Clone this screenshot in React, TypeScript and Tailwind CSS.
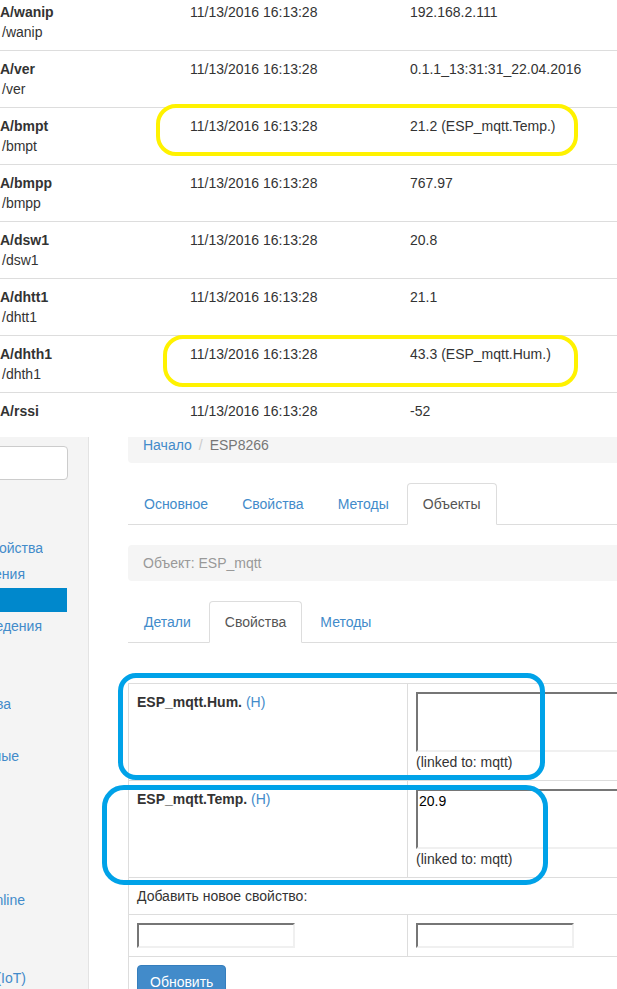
import React from 'react';

// rows of the topic list (upper screenshot)
const topics = [
  { name: 'A/wanip', path: '/wanip', value: '192.168.2.111' },
  { name: 'A/ver', path: '/ver', value: '0.1.1_13:31:31_22.04.2016' },
  { name: 'A/bmpt', path: '/bmpt', value: '21.2 (ESP_mqtt.Temp.)' },
  { name: 'A/bmpp', path: '/bmpp', value: '767.97' },
  { name: 'A/dsw1', path: '/dsw1', value: '20.8' },
  { name: 'A/dhtt1', path: '/dhtt1', value: '21.1' },
  { name: 'A/dhth1', path: '/dhth1', value: '43.3 (ESP_mqtt.Hum.)' },
  { name: 'A/rssi', path: '', value: '-52' },
];

function TopicTable() {
  return (
    <div className="h-[437px] overflow-hidden">
      <div className="-mt-[6px]">
        {topics.map((t) => (
          <div key={t.name} className="grid grid-cols-[190px_220px_1fr] border-b border-[#dddddd] py-2 leading-5">
            <div className="whitespace-nowrap">
              <div className="font-bold">{t.name}</div>
              <div className="ml-[2px] h-5">{t.path}</div>
            </div>
            <div>11/13/2016 16:13:28</div>
            <div className="whitespace-nowrap">{t.value}</div>
          </div>
        ))}
      </div>
    </div>
  );
}

// sidebar items: visible tail of the text, width where the text ends, top margin
const sideItems: { text: string; w: number; mt: number; active?: boolean }[] = [
  { text: 'Свойства', w: 43, mt: 55 },
  { text: 'Значения', w: 25, mt: 0 },
  { text: '', w: 67, mt: 0, active: true },
  { text: 'Поведения', w: 42, mt: 0 },
  { text: '', w: 0, mt: 0 },
  { text: '', w: 0, mt: 0 },
  { text: 'Устройства', w: 11, mt: 0 },
  { text: '', w: 0, mt: 0 },
  { text: 'Данные', w: 19, mt: 0 },
  { text: 'Online', w: 25, mt: 118 },
  { text: 'Устройства (IoT)', w: 26, mt: 52 },
];

function Sidebar() {
  return (
    <div className="w-[89px] shrink-0 bg-[#f4f4f4] border-r border-[#e3e3e3]">
      <div className="mt-[9px] h-[34px] w-[72px] -ml-[4px] bg-white border border-[#cccccc] rounded-[4px]" />
      {sideItems.map((it, i) => (
        <div key={i} className="h-[26px] flex items-center" style={{ marginTop: it.mt }}>
          {it.active ? (
            <div className="h-[24px] w-[67px] bg-[#0088cc]" />
          ) : (
            <div className="flex justify-end overflow-hidden whitespace-nowrap text-[#428bca]" style={{ width: it.w }}>
              {it.text}
            </div>
          )}
        </div>
      ))}
    </div>
  );
}

function Tabs({ items, active }: { items: string[]; active: string }) {
  return (
    <div className="flex border-b border-[#dddddd] w-[600px]">
      {items.map((label) => (
        <div key={label} className="-mb-[1px] mr-[2px]">
          <div
            className={
              label === active
                ? 'px-[15px] py-[10px] leading-5 border border-[#dddddd] border-b-white rounded-t-[4px] bg-white text-[#555555]'
                : 'px-[15px] py-[10px] leading-5 border border-transparent text-[#428bca]'
            }
          >
            {label}
          </div>
        </div>
      ))}
    </div>
  );
}

function Textarea({ value }: { value?: string }) {
  return (
    <div className="h-[60px] w-[260px] bg-white border-2 border-t-[#767676] border-l-[#767676] border-b-[#f0f0f0] border-r-[#f0f0f0] px-[1px] leading-5 text-black">
      {value}
    </div>
  );
}

function SmallInput() {
  return (
    <div className="h-[25px] w-[158px] bg-white border-2 border-t-[#767676] border-l-[#767676] border-b-[#f0f0f0] border-r-[#f0f0f0]" />
  );
}

function PropRow({ name, value }: { name: string; value?: string }) {
  return (
    <div className="grid grid-cols-[279px_1fr] border-b border-[#dddddd]">
      <div className="p-2 leading-5 border-r border-[#dddddd]">
        <span className="font-bold">{name}</span> <span className="text-[#428bca]">(H)</span>
      </div>
      <div className="p-2 leading-5">
        <Textarea value={value} />
        <div>(linked to: mqtt)</div>
      </div>
    </div>
  );
}

function Main() {
  return (
    <div className="pl-[39px] -mt-[10px]">
      <div className="w-[600px] h-[36px] bg-[#f5f5f5] rounded-[4px] px-[15px] py-2 leading-5">
        <span className="text-[#428bca]">Начало</span>
        <span className="text-[#cccccc] px-[7px]">/</span>
        <span className="text-[#777777]">ESP8266</span>
      </div>
      <div className="mt-5">
        <Tabs items={['Основное', 'Свойства', 'Методы', 'Объекты']} active="Объекты" />
      </div>
      <div className="mt-5 w-[600px] h-[36px] bg-[#f5f5f5] rounded-[4px] px-[15px] py-2 leading-5 text-[#999999]">
        Объект: ESP_mqtt
      </div>
      <div className="mt-5">
        <Tabs items={['Детали', 'Свойства', 'Методы']} active="Свойства" />
      </div>
      <div className="mt-[40px] w-[600px] border-l border-t border-[#dddddd]">
        <PropRow name="ESP_mqtt.Hum." />
        <PropRow name="ESP_mqtt.Temp." value="20.9" />
        <div className="p-2 leading-5 border-b border-[#dddddd]">Добавить новое свойство:</div>
        <div className="grid grid-cols-[279px_1fr] border-b border-[#dddddd]">
          <div className="p-2 border-r border-[#dddddd]">
            <SmallInput />
          </div>
          <div className="p-2">
            <SmallInput />
          </div>
        </div>
        <div className="p-2">
          <button className="h-[34px] px-3 bg-[#428bca] border border-[#357ebd] rounded-[4px] text-white leading-5">
            Обновить
          </button>
        </div>
      </div>
    </div>
  );
}

export default function App() {
  return (
    <div
      className="relative w-[617px] h-[989px] overflow-hidden bg-white text-[14px] text-[#333333]"
      style={{ fontFamily: '"Liberation Sans", Arial, sans-serif' }}
    >
      <TopicTable />
      <div className="flex h-[552px] overflow-hidden">
        <Sidebar />
        <Main />
      </div>

      {/* hand-drawn highlight marks */}
      <div className="absolute left-[156px] top-[104px] w-[422px] h-[52px] border-4 border-[#fff200] rounded-[20px]" />
      <div className="absolute left-[163px] top-[335px] w-[415px] h-[52px] border-4 border-[#fff200] rounded-[20px]" />
      <div className="absolute left-[118px] top-[673px] w-[427px] h-[107px] border-[5px] border-[#00a2e8] rounded-[18px]" />
      <div className="absolute left-[102px] top-[785px] w-[446px] h-[100px] border-[5px] border-[#00a2e8] rounded-[22px]" />
    </div>
  );
}
